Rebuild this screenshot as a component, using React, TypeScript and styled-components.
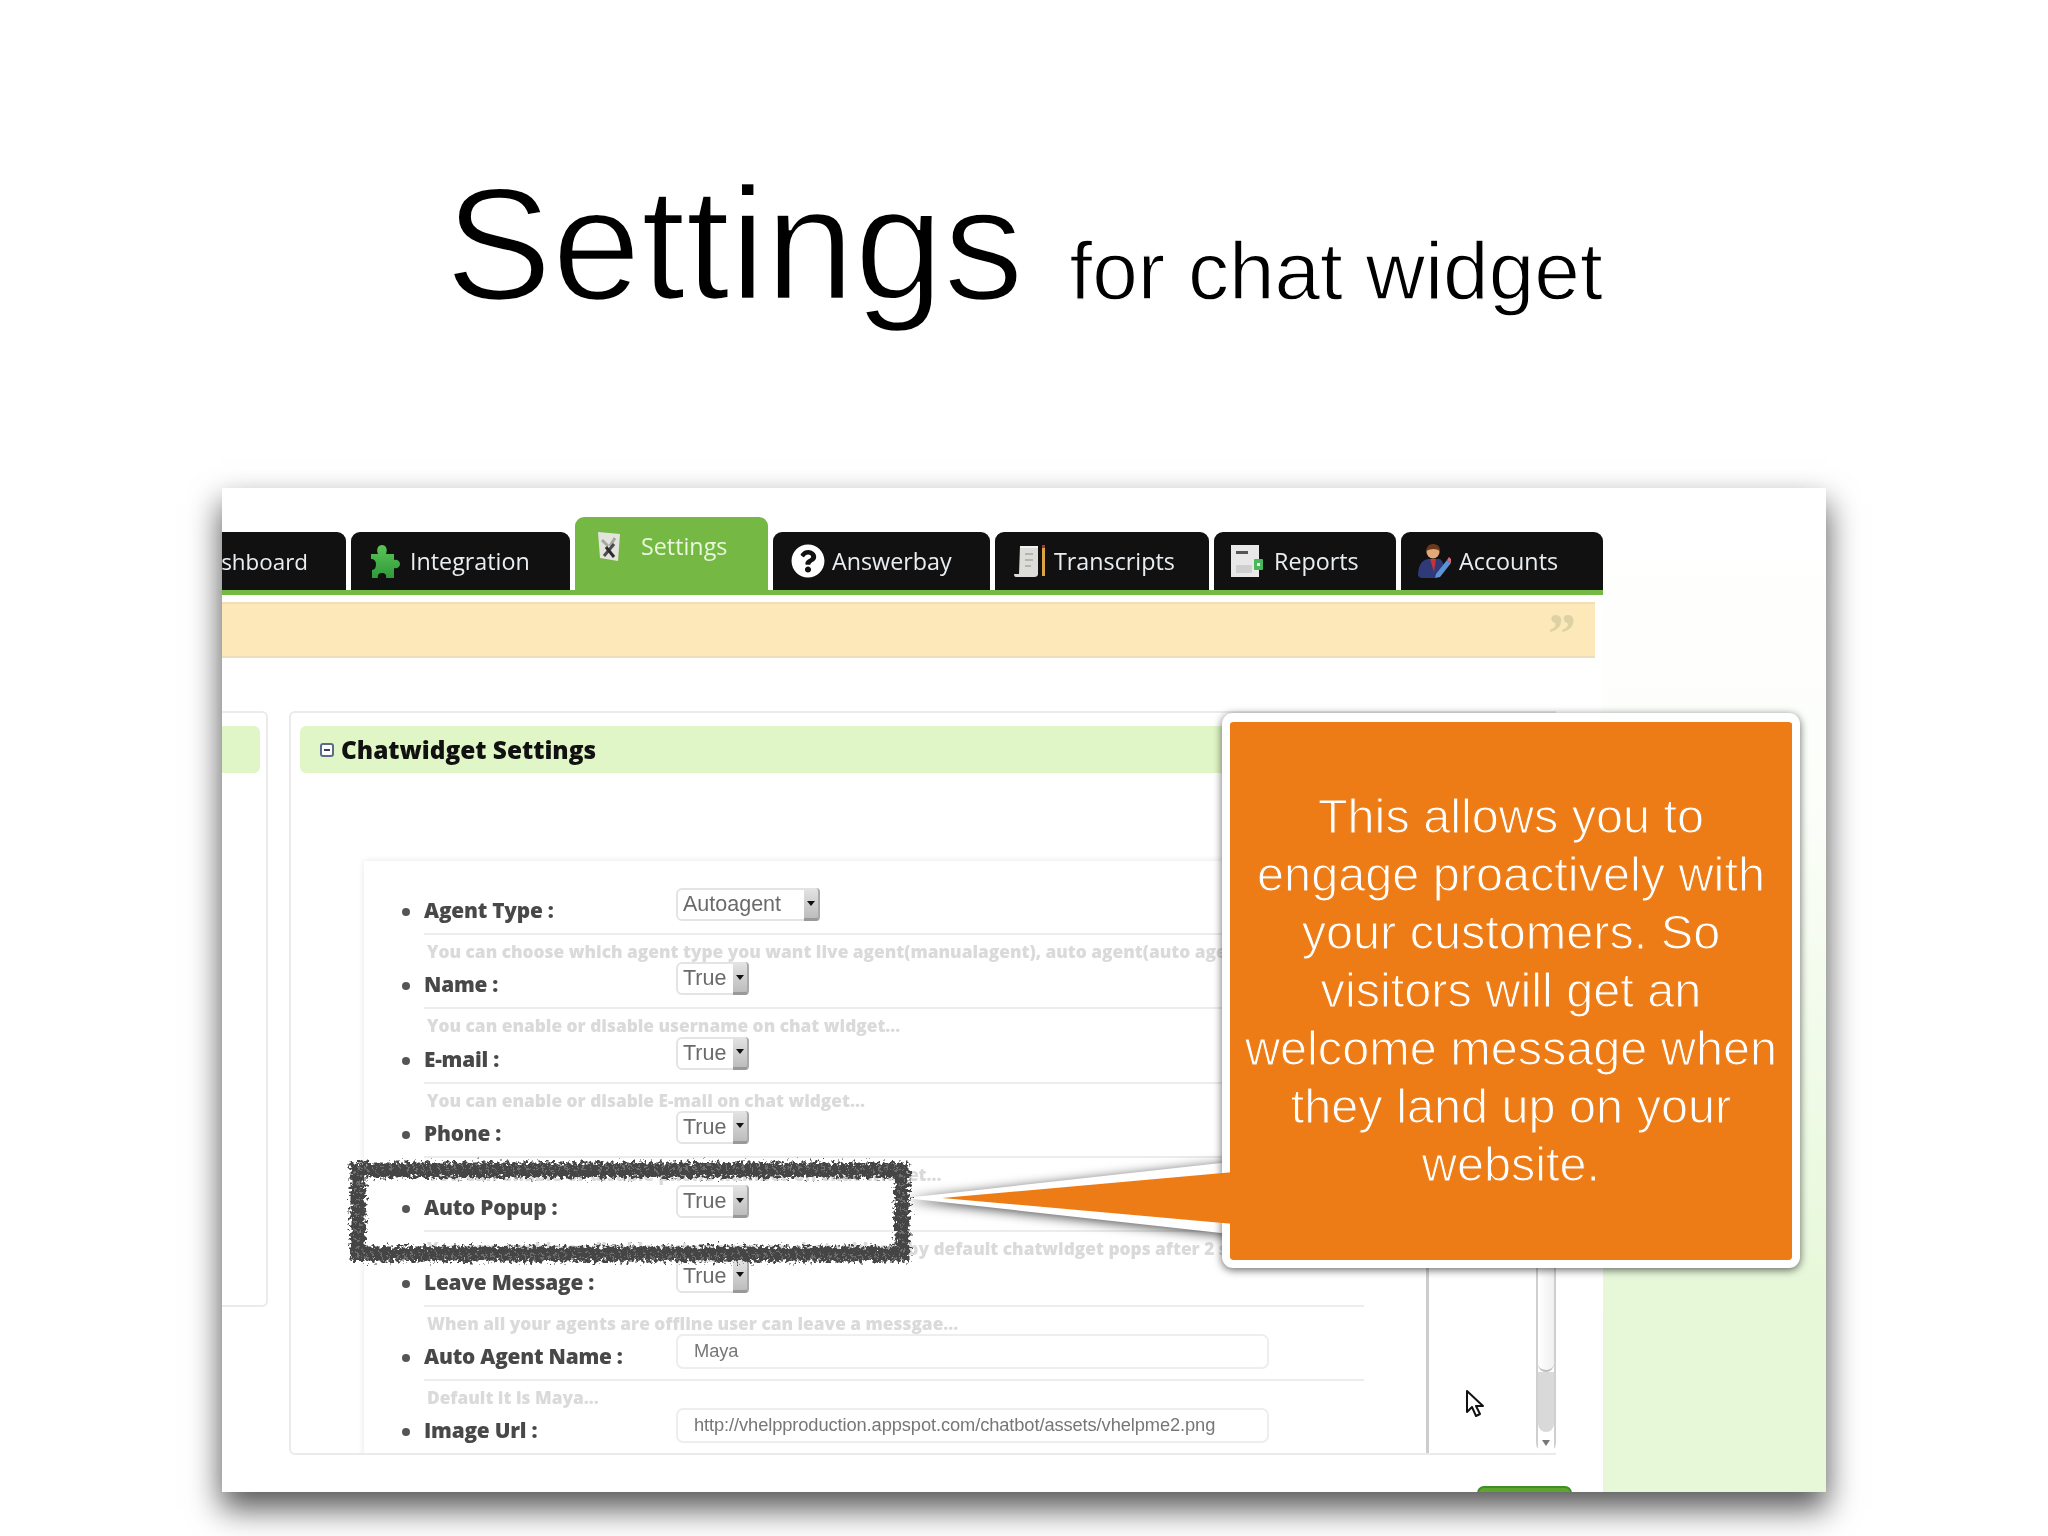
import React from "react"
import styled, { createGlobalStyle } from "styled-components"
import { FaQuestionCircle } from "react-icons/fa"

const GlobalStyle = createGlobalStyle`
	html, body {
		margin: 0;
		padding: 0;
		background: #fff;
	}
	body {
		font-family: "Liberation Sans", Arial, sans-serif;
		overflow: hidden;
	}
`

const Slide = styled.div`
	width: 2048px;
	height: 1536px;
	overflow: hidden;
	background: #fff;
`

const TitleBlock = styled.div`
	box-sizing: border-box;
	height: 488px;
	padding-top: 164px;
	display: flex;
	justify-content: center;
	align-items: baseline;
	gap: 46px;
	color: #000;
	line-height: 1;
`

const TitleMain = styled.span`
	font-size: 160px;
	-webkit-text-stroke: 2.6px #fff;
`

const TitleSub = styled.span`
	font-size: 82px;
	-webkit-text-stroke: 1.3px #fff;
`

const ShadowFrame = styled.div`
	width: 1604px;
	height: 1004px;
	margin-left: 222px;
	box-shadow: 0 16px 30px 1px rgba(0, 0, 0, 0.66);
`

const Screenshot = styled.div`
	position: relative;
	display: flex;
	width: 1604px;
	height: 1004px;
	overflow: hidden;
	background: #fff;
`

const Main = styled.div`
	width: 1381px;
	flex: none;
	filter: blur(0.5px);
`

const Aside = styled.div`
	flex: 1;
	background: linear-gradient(#fff 0%, #fcfefa 30%, #e6f8d8 82%, #e6f8d8 100%);
`

const Nav = styled.nav`
	box-sizing: border-box;
	height: 107px;
	padding-top: 29px;
	display: flex;
	align-items: flex-end;
	gap: 5px;
	border-bottom: 5px solid #75b843;
`

const Tab = styled.div<{ $width: number; $active?: boolean; $pad: number; $gap: number }>`
	box-sizing: border-box;
	flex: none;
	display: flex;
	align-items: center;
	width: ${(p) => p.$width}px;
	height: ${(p) => (p.$active ? 73 : 58)}px;
	padding-left: ${(p) => p.$pad}px;
	padding-bottom: ${(p) => (p.$active ? 15 : 0)}px;
	gap: ${(p) => p.$gap}px;
	border-radius: 9px 9px 0 0;
	background: ${(p) => (p.$active ? "#75b843" : "#111")};
	color: ${(p) => (p.$active ? "#e8f6dc" : "#e9eef2")};
	font-family: "Open Sans", sans-serif;
	font-size: 23.3px;
	white-space: nowrap;
`

const EdgeTab = styled(Tab)`
	justify-content: flex-end;
	padding-left: 0;
	padding-right: 38px;
	border-top-left-radius: 0;
	font-size: 22.4px;
`

const Notice = styled.div`
	box-sizing: border-box;
	width: 1373px;
	height: 56px;
	margin-top: 7px;
	padding: 8px 19px 0 0;
	display: flex;
	justify-content: flex-end;
	border-top: 2px solid #f0dfb6;
	border-bottom: 2px solid #eedfbc;
	background: #fce8b8;
`

const QuoteMark = styled.span`
	font-family: "Liberation Serif", serif;
	font-weight: 700;
	font-size: 56px;
	line-height: 44px;
	color: #ddd2a4;
`

const Panels = styled.div`
	display: flex;
	align-items: flex-start;
	gap: 21px;
	margin-top: 53px;
`

const SidePanel = styled.div`
	box-sizing: border-box;
	width: 46px;
	height: 596px;
	padding-top: 13px;
	border: 2px solid #ebebeb;
	border-left: 0;
	border-radius: 0 6px 6px 0;
`

const SideBar = styled.div`
	width: 38px;
	height: 47px;
	background: #e0f6c6;
	border-radius: 0 6px 6px 0;
`

const SettingsPanel = styled.div`
	box-sizing: border-box;
	width: 1267px;
	height: 744px;
	padding: 13px 0 0 9px;
	border: 2px solid #ebebeb;
	border-right: 0;
	border-radius: 6px 0 0 6px;
`

const PanelHeader = styled.div`
	display: flex;
	align-items: center;
	gap: 7px;
	height: 47px;
	padding-left: 20px;
	background: #e0f6c6;
	border-radius: 6px 0 0 6px;
	font-family: "Open Sans", sans-serif;
	font-weight: 800;
	font-size: 24.4px;
	color: #111;
	white-space: nowrap;
`

const Collapse = styled.span`
	box-sizing: border-box;
	width: 14px;
	height: 14px;
	display: flex;
	align-items: center;
	justify-content: center;
	border: 2px solid #5c6b8c;
	border-radius: 3px;
	background: #fff;

	&::before {
		content: "";
		width: 6px;
		height: 2px;
		background: #38415c;
	}
`

const PanelBody = styled.div`
	display: flex;
	height: 680px;
`

const FormArea = styled.div`
	box-sizing: border-box;
	width: 1129px;
	padding: 88px 0 0 64px;
	overflow: hidden;
	border-right: 3px solid #cdcdcd;
`

const FormCard = styled.div`
	height: 700px;
	padding: 27px 62px 0 60px;
	box-shadow: 0 0 7px rgba(0, 0, 0, 0.1);
`

const FieldList = styled.ul`
	list-style: none;
	margin: 0;
	padding: 0;
`

const FieldRow = styled.li`
	height: 74.33px;
`

const FieldTop = styled.div`
	box-sizing: border-box;
	display: flex;
	align-items: flex-start;
	height: 47px;
	border-bottom: 2px solid #ececec;
`

const Dot = styled.span`
	flex: none;
	width: 8px;
	height: 8px;
	margin: 20px 14px 0 -22px;
	border-radius: 50%;
	background: #555;
`

const FieldLabel = styled.label`
	flex: none;
	width: 252px;
	padding-top: 8px;
	font-family: "Open Sans", sans-serif;
	font-weight: 800;
	font-size: 20.8px;
	line-height: 28px;
	letter-spacing: -0.2px;
	color: #484848;
	white-space: nowrap;
`

const Select = styled.div<{ $width: number }>`
	box-sizing: border-box;
	width: ${(p) => p.$width}px;
	height: 33px;
	padding-left: 5px;
	display: flex;
	align-items: center;
	justify-content: space-between;
	border: 2px solid #e4e4e4;
	border-radius: 6px;
	background: #fff;
	font-size: 21.5px;
	color: #6a6a6a;
`

const SelectArrow = styled.span`
	box-sizing: border-box;
	width: 16px;
	height: 33px;
	margin: -2px -2px -2px 0;
	display: flex;
	align-items: center;
	justify-content: center;
	border-right: 2px solid #aaa;
	border-bottom: 3px solid #999;
	border-radius: 0 4px 4px 0;
	background: linear-gradient(#e4e4e4, #bdbdbd);

	&::before {
		content: "";
		border-left: 4px solid transparent;
		border-right: 4px solid transparent;
		border-top: 5px solid #111;
	}
`

const TextValue = styled.div`
	box-sizing: border-box;
	width: 593px;
	height: 35px;
	padding-left: 16px;
	line-height: 29px;
	border: 2px solid #eeeeee;
	border-radius: 7px;
	background: #fff;
	font-size: 18.3px;
	letter-spacing: -0.1px;
	color: #777;
	white-space: nowrap;
`

const Hint = styled.div`
	margin: 8px 0 0 3px;
	font-family: "Open Sans", sans-serif;
	font-weight: 800;
	font-size: 17.3px;
	line-height: 18px;
	color: #dadada;
	white-space: nowrap;
`

const SpareColumn = styled.div`
	flex: 1;
`

const Scrollbar = styled.div`
	box-sizing: border-box;
	flex: none;
	width: 20px;
	display: flex;
	flex-direction: column;
	border: 2px solid #cfcfcf;
	border-top: 0;
	border-bottom: 0;
	border-radius: 0 0 10px 10px;
`

const ScrollThumb = styled.div`
	flex: none;
	height: 597px;
	background: linear-gradient(90deg, #fff, #f0f0f0);
	border-bottom: 2px solid #bdbdbd;
	border-radius: 0 0 8px 8px;
`

const ScrollTrack = styled.div`
	flex: 1;
	background: #d9d9d9;
	border-radius: 0 0 8px 8px;
`

const ScrollButton = styled.div`
	flex: none;
	height: 21px;
	display: flex;
	align-items: center;
	justify-content: center;
	background: #fff;

	&::before {
		content: "";
		border-left: 4px solid transparent;
		border-right: 4px solid transparent;
		border-top: 6px solid #777;
	}
`

const SaveButton = styled.div`
	box-sizing: border-box;
	width: 95px;
	height: 20px;
	margin: 31px 0 0 1255px;
	border: 2px solid #3f8f27;
	border-radius: 7px 7px 0 0;
	background: #5da530;
`

const CalloutTailBack = styled.svg`
	position: absolute;
	left: 683px;
	top: 670px;
	width: 330px;
	height: 84px;
	overflow: visible;
	filter: drop-shadow(0 2px 6px rgba(0, 0, 0, 0.7));
`

const CalloutTailFront = styled.svg`
	position: absolute;
	left: 720px;
	top: 684px;
	width: 292px;
	height: 52px;
`

const Callout = styled.div`
	position: absolute;
	box-sizing: border-box;
	left: 1000px;
	top: 225px;
	width: 578px;
	height: 555px;
	padding-top: 65px;
	border: 8px solid #fff;
	border-top-width: 9px;
	border-radius: 11px;
	background: #ee7c16;
	background-clip: padding-box;
	box-shadow: 0 2px 9px rgba(0, 0, 0, 0.6);
	color: #fff;
	font-size: 48.6px;
	line-height: 58px;
	text-align: center;
	white-space: nowrap;
	-webkit-text-stroke: 1.1px #ee7c16;
`

const Scribble = styled.svg`
	position: absolute;
	left: 118px;
	top: 669px;
	width: 580px;
	height: 120px;
`

const Cursor = styled.svg`
	position: absolute;
	left: 1243px;
	top: 901px;
	width: 20px;
	height: 29px;
`

const TabIconFrame = styled.svg`
	flex: none;
	display: block;
`

const HelpIcon = styled(FaQuestionCircle)`
	flex: none;
	width: 34px;
	height: 34px;
	color: #fff;
`

const fields = [
	{ label: "Agent Type :", width: 144, value: "Autoagent", hint: "You can choose which agent type you want live agent(manualagent), auto agent(auto agent)..." },
	{ label: "Name :", width: 73, value: "True", hint: "You can enable or disable username on chat widget..." },
	{ label: "E-mail :", width: 73, value: "True", hint: "You can enable or disable E-mail on chat widget..." },
	{ label: "Phone :", width: 73, value: "True", hint: "You can enable or disable phone number on chat widget..." },
	{ label: "Auto Popup :", width: 73, value: "True", hint: "You can enable or disable auto popup on chat widget, by default chatwidget pops after 2 seconds..." },
	{ label: "Leave Message :", width: 73, value: "True", hint: "When all your agents are offline user can leave a messgae..." },
	{ label: "Auto Agent Name :", text: "Maya", hint: "Default it is Maya..." },
	{ label: "Image Url :", text: "http://vhelpproduction.appspot.com/chatbot/assets/vhelpme2.png", hint: "" },
]

function PuzzleIcon() {
	return (
		<TabIconFrame width="32" height="35" viewBox="0 0 32 35">
			<defs>
				<linearGradient id="puzzle" x1="0" y1="0" x2="0" y2="1">
					<stop offset="0" stopColor="#5cc456" />
					<stop offset="1" stopColor="#2f9a3a" />
				</linearGradient>
			</defs>
			<path
				d="M3 10 H10 C8 5 10 1 14 1 C18 1 20 5 18 10 H26 V16 C29 15 32 17 32 20 C32 23 29 25 26 24 V34 H18 C19 31 17 29 14 29 C11 29 9 31 10 34 H4 V26 C7 26 8 23 8 20 C8 17 6 15 3 15 Z"
				fill="url(#puzzle)"
			/>
		</TabIconFrame>
	)
}

function ToolsIcon() {
	return (
		<TabIconFrame width="24" height="30" viewBox="0 0 24 30">
			<path d="M1 1 L23 3 L21 30 L3 27 Z" fill="#e4e4de" />
			<path d="M5 9 L11 15 M18 7 L13 15" stroke="#a8a8a2" strokeWidth="3" />
			<path d="M7 25 L17 13" stroke="#4c4c4c" strokeWidth="3" />
			<path d="M9 16 L17 26" stroke="#2c2c2c" strokeWidth="3" />
		</TabIconFrame>
	)
}

function ScrollIcon() {
	return (
		<TabIconFrame width="32" height="34" viewBox="0 0 32 34">
			<path d="M6 2 H24 V30 Q24 33 20 33 H2 Q0 33 0 30 H5 Z" fill="#dcdcd8" />
			<path d="M6 2 H24 V4 H6 Z" fill="#f2f2f0" />
			<path d="M11 10 H19 M11 16 H19 M11 22 H17" stroke="#b5b5b0" strokeWidth="2" />
			<rect x="28" y="2" width="3" height="30" fill="#d9a441" />
			<rect x="28" y="1" width="3" height="3" fill="#a33" />
		</TabIconFrame>
	)
}

function ReportIcon() {
	return (
		<TabIconFrame width="32" height="32" viewBox="0 0 32 32">
			<rect x="0" y="0" width="28" height="32" fill="#e8e8e8" />
			<rect x="5" y="6" width="12" height="3" fill="#555" />
			<rect x="5" y="20" width="16" height="8" fill="#cfcfcf" />
			<rect x="23" y="14" width="9" height="11" rx="1" fill="#49b85a" />
			<rect x="26" y="18" width="3" height="3" fill="#e8f8e8" />
		</TabIconFrame>
	)
}

function AccountIcon() {
	return (
		<TabIconFrame width="34" height="34" viewBox="0 0 34 34">
			<path d="M1 32 Q1 17 11 15 L23 15 Q28 18 26 28 L18 34 H4 Z" fill="#2f3a78" />
			<path d="M13 15 L19 15 L17 28 Z" fill="#c8323a" />
			<circle cx="16" cy="8" r="6.5" fill="#e2a878" />
			<path d="M9 7 Q10 0 16 0 Q23 0 23 7 Q17 3 9 7 Z" fill="#6b3a1a" />
			<path d="M19 30 L30 16 L34 19 L23 33 L18 34 Z" fill="#5b93d8" />
			<path d="M30 16 L32 13 L34 15 L34 19 Z" fill="#d86a78" />
		</TabIconFrame>
	)
}

export default function App() {
	return (
		<Slide>
			<GlobalStyle />
			<TitleBlock>
				<TitleMain>Settings</TitleMain>
				<TitleSub>for chat widget</TitleSub>
			</TitleBlock>
			<ShadowFrame>
				<Screenshot>
					<Main>
						<Nav>
							<EdgeTab $width={124} $pad={0} $gap={0}>shboard</EdgeTab>
							<Tab $width={219} $pad={17} $gap={10}><PuzzleIcon />Integration</Tab>
							<Tab $width={193} $pad={22} $gap={20} $active><ToolsIcon />Settings</Tab>
							<Tab $width={217} $pad={18} $gap={7}><HelpIcon />Answerbay</Tab>
							<Tab $width={214} $pad={19} $gap={8}><ScrollIcon />Transcripts</Tab>
							<Tab $width={182} $pad={17} $gap={11}><ReportIcon />Reports</Tab>
							<Tab $width={202} $pad={16} $gap={8}><AccountIcon />Accounts</Tab>
						</Nav>
						<Notice>
							<QuoteMark>”</QuoteMark>
						</Notice>
						<Panels>
							<SidePanel>
								<SideBar />
							</SidePanel>
							<SettingsPanel>
								<PanelHeader>
									<Collapse />
									Chatwidget Settings
								</PanelHeader>
								<PanelBody>
									<FormArea>
										<FormCard>
											<FieldList>
												{fields.map((f) => (
													<FieldRow key={f.label}>
														<FieldTop>
															<Dot />
															<FieldLabel>{f.label}</FieldLabel>
															{f.text ? (
																<TextValue>{f.text}</TextValue>
															) : (
																<Select $width={f.width as number}>
																	{f.value}
																	<SelectArrow />
																</Select>
															)}
														</FieldTop>
														<Hint>{f.hint}</Hint>
													</FieldRow>
												))}
											</FieldList>
										</FormCard>
									</FormArea>
									<SpareColumn />
									<Scrollbar>
										<ScrollThumb />
										<ScrollTrack />
										<ScrollButton />
									</Scrollbar>
								</PanelBody>
							</SettingsPanel>
						</Panels>
						<SaveButton />
					</Main>
					<Aside />
					<CalloutTailBack viewBox="0 0 330 84">
						<polygon points="0,40 325,4 325,76" fill="#fff" />
					</CalloutTailBack>
					<Callout>
						This allows you to<br />
						engage proactively with<br />
						your customers. So<br />
						visitors will get an<br />
						welcome message when<br />
						they land up on your<br />
						website.
					</Callout>
					<CalloutTailFront viewBox="0 0 292 52">
						<polygon points="0,26 292,0 292,52" fill="#ee7c16" />
					</CalloutTailFront>
					<Scribble viewBox="0 0 580 120">
						<defs>
							<filter id="rough" x="-5%" y="-20%" width="110%" height="140%">
								<feTurbulence type="fractalNoise" baseFrequency="0.3" numOctaves="4" seed="7" result="noise" />
								<feDisplacementMap in="SourceGraphic" in2="noise" scale="13" />
							</filter>
						</defs>
						<rect x="18" y="13" width="544" height="84" fill="none" stroke="#444" strokeWidth="15" filter="url(#rough)" />
						<rect x="18" y="11" width="544" height="88" fill="none" stroke="#6e6e6e" strokeWidth="7" strokeDasharray="2 6" filter="url(#rough)" />
					</Scribble>
					<Cursor viewBox="0 0 20 29">
						<path d="M2 2 L2 23 L7 18 L11 27 L15 25 L11 17 L18 17 Z" fill="#fff" stroke="#111" strokeWidth="2" strokeLinejoin="round" />
					</Cursor>
				</Screenshot>
			</ShadowFrame>
		</Slide>
	)
}
